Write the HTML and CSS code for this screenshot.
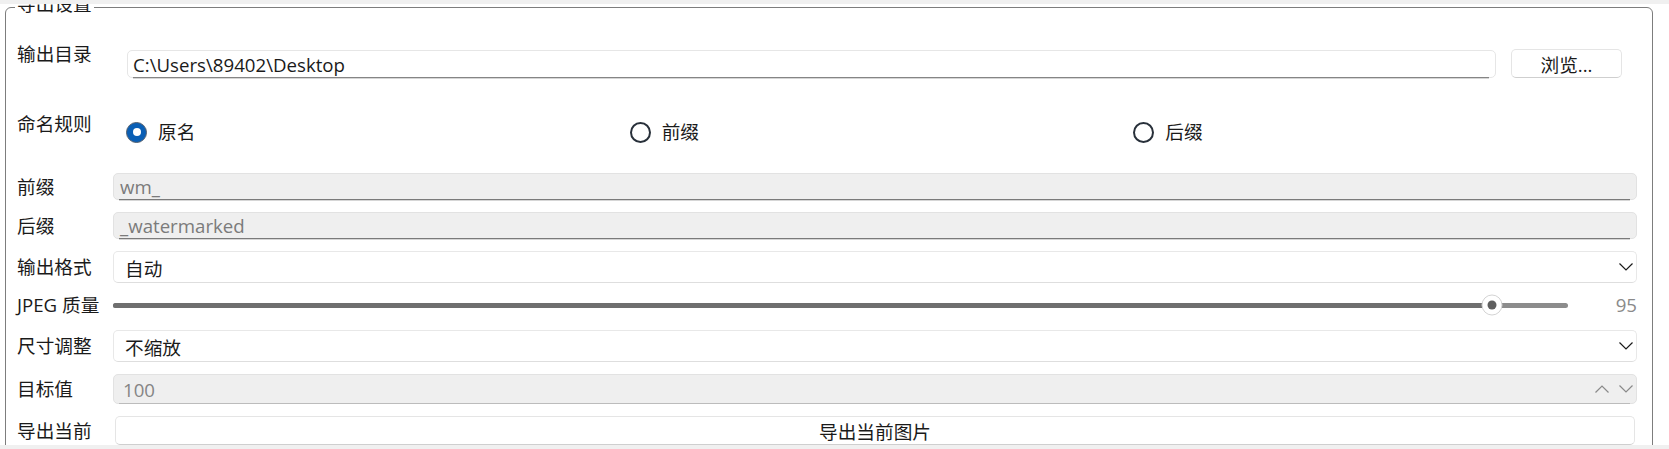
FILE: index.html
```html
<!DOCTYPE html>
<html lang="zh-CN">
<head>
<meta charset="utf-8">
<title>导出设置</title>
<link rel="stylesheet" href="styles.css">
</head>
<body>
<div class="window">
  <div class="viewport">
    <fieldset class="group">
      <legend class="group-title">导出设置</legend>

      <div class="row row-dir">
        <label class="label">输出目录</label>
        <div class="dir-box">
          <div class="lineedit"><span>C:\Users\89402\Desktop</span></div>
          <button class="btn btn-browse">浏览...</button>
        </div>
      </div>

      <div class="row row-naming">
        <label class="label">命名规则</label>
        <div class="radio-group">
          <div class="radio checked"><span class="radio-mark"></span><span>原名</span></div>
          <div class="radio"><span class="radio-mark"></span><span>前缀</span></div>
          <div class="radio"><span class="radio-mark"></span><span>后缀</span></div>
        </div>
      </div>

      <div class="form">
        <div class="row">
          <label class="label">前缀</label>
          <div class="lineedit disabled field"><span>wm_</span></div>
        </div>
        <div class="row">
          <label class="label">后缀</label>
          <div class="lineedit disabled field"><span>_watermarked</span></div>
        </div>
        <div class="row">
          <label class="label">输出格式</label>
          <div class="combo field">
            <span>自动</span>
            <svg class="chev" width="14" height="8" viewBox="0 0 14 8"><polyline points="0.5,0.5 7,7 13.5,0.5" /></svg>
          </div>
        </div>
        <div class="row row-slider">
          <label class="label">JPEG 质量</label>
          <div class="slider">
            <div class="track">
              <div class="track-fill" style="width: 94.8%"></div>
              <div class="handle" style="left: 94.8%"><span class="handle-dot"></span></div>
            </div>
          </div>
          <span class="slider-value">95</span>
        </div>
        <div class="row">
          <label class="label">尺寸调整</label>
          <div class="combo field">
            <span>不缩放</span>
            <svg class="chev" width="14" height="8" viewBox="0 0 14 8"><polyline points="0.5,0.5 7,7 13.5,0.5" /></svg>
          </div>
        </div>
        <div class="row">
          <label class="label">目标值</label>
          <div class="spin disabled field">
            <span>100</span>
            <span class="spin-arrows">
              <svg class="chev chev-dim" width="14" height="8" viewBox="0 0 14 8"><polyline points="0.5,7.5 7,1 13.5,7.5" /></svg>
              <svg class="chev chev-dim" width="14" height="8" viewBox="0 0 14 8"><polyline points="0.5,0.5 7,7 13.5,0.5" /></svg>
            </span>
          </div>
        </div>
        <div class="row row-export">
          <label class="label">导出当前</label>
          <button class="btn btn-export">导出当前图片</button>
        </div>
      </div>
    </fieldset>
  </div>
</div>
</body>
</html>
```

FILE: styles.css
```css
html, body {
  margin: 0;
  padding: 0;
}

body {
  background: #f0f0f0;
  font-family: "Open Sans", "Noto Sans CJK SC", sans-serif;
  font-size: 18.67px;
  color: #1a1a1a;
}

.window {
  width: 1669px;
  height: 449px;
  overflow: hidden;
}

.viewport {
  margin-top: 4px;
  height: 441px;
  background: #ffffff;
  overflow: hidden;
}

.group {
  margin: -9px 0 0 5px;
  width: 1648px;
  box-sizing: border-box;
  border: 1px solid #7d7d7d;
  border-radius: 6px;
  padding: 0 15px 20px 11px;
  min-width: 0;
}

.group-title {
  padding: 0 2px 6px;
  margin-left: -2px;
  line-height: 18px;
}

.row {
  display: flex;
  align-items: flex-start;
}

.label {
  width: 96px;
  flex: none;
  line-height: 24px;
  white-space: nowrap;
}

/* output directory row */
.row-dir {
  margin-top: 23px;
}

.dir-box {
  flex: 1;
  display: flex;
  gap: 15px;
  margin: 8px 15px 0 14px;
}

.lineedit {
  position: relative;
  flex: 1;
  height: 28px;
  box-sizing: border-box;
  border: 1px solid #e6e6e6;
  border-radius: 5px;
  background: #ffffff;
  padding: 0 5px;
  display: flex;
  align-items: center;
  white-space: nowrap;
}

.lineedit::after {
  content: "";
  position: absolute;
  left: 5px;
  right: 6px;
  bottom: -1px;
  height: 1px;
  background: #858585;
  box-shadow: 0 1px 0 #d6d6d6;
}

.lineedit.disabled {
  height: 27px;
  background: #efefef;
  border-color: #e2e2e2;
  color: #7b7b7b;
  padding-left: 6px;
}

.lineedit.disabled::after {
  background: #7a7a7a;
}

.btn {
  font: inherit;
  color: inherit;
  background: #ffffff;
  border: 1px solid #e5e5e5;
  border-bottom-color: #cfcfcf;
  border-radius: 5px;
  padding: 0;
  box-sizing: border-box;
  cursor: default;
}

.btn-browse {
  flex: none;
  width: 111px;
  height: 29px;
  margin-top: -1px;
}

/* naming rule row */
.row-naming {
  margin-top: 34px;
}

.radio-group {
  flex: 1;
  display: grid;
  grid-template-columns: repeat(3, 1fr);
  margin: 8px 0 0 13px;
}

.radio {
  display: flex;
  align-items: center;
  gap: 11px;
  line-height: 24px;
}

.radio-mark {
  flex: none;
  width: 21px;
  height: 21px;
  box-sizing: border-box;
  border-radius: 50%;
  border: 2px solid #28303a;
  background: #ffffff;
}

.radio.checked .radio-mark {
  border: 1.5px solid #55606e;
  background: #0a5fb5;
  display: flex;
  align-items: center;
  justify-content: center;
}

.radio.checked .radio-mark::before {
  content: "";
  width: 8px;
  height: 8px;
  border-radius: 50%;
  background: #ffffff;
}

/* form rows */
.form {
  margin-top: 29px;
  display: flex;
  flex-direction: column;
  gap: 12px;
}

.form .row {
  align-items: center;
}

.field {
  flex: 1;
}

.combo {
  height: 32px;
  box-sizing: border-box;
  border: 1px solid #e8e8e8;
  border-bottom-color: #dedede;
  border-radius: 5px;
  background: #ffffff;
  display: flex;
  align-items: center;
  justify-content: space-between;
  padding: 0 3px 0 11px;
}

.chev {
  display: block;
  fill: none;
  stroke: #1a1a1a;
  stroke-width: 1.2;
}

.chev-dim {
  stroke: #8a8a8a;
}

/* slider */
.row-slider {
  height: 26px;
  margin-top: -3px;
}

.slider {
  flex: 1;
}

.track {
  position: relative;
  height: 5px;
  border-radius: 3px;
  background: #8c8c8c;
}

.track-fill {
  height: 100%;
  border-radius: 3px;
  background: #6f6f6f;
}

.handle {
  position: absolute;
  top: 50%;
  width: 21px;
  height: 21px;
  box-sizing: border-box;
  transform: translate(-50%, -50%);
  border-radius: 50%;
  background: #ffffff;
  border: 1px solid #d4d4d4;
  display: flex;
  align-items: center;
  justify-content: center;
}

.handle-dot {
  width: 9px;
  height: 9px;
  border-radius: 50%;
  background: #5f5f5f;
}

.slider-value {
  width: 69px;
  flex: none;
  text-align: right;
  color: #8a8a8a;
  line-height: 24px;
}

/* spin box */
.spin {
  position: relative;
  height: 30px;
  box-sizing: border-box;
  border: 1px solid #e2e2e2;
  border-radius: 5px;
  background: #efefef;
  color: #858585;
  display: flex;
  align-items: center;
  justify-content: space-between;
  padding: 0 3px 0 9px;
}

.spin::after {
  content: "";
  position: absolute;
  left: 5px;
  right: 6px;
  bottom: -1px;
  height: 1px;
  background: #bcbcbc;
}

.spin-arrows {
  display: flex;
  gap: 10px;
}

/* export */
.btn-export {
  flex: 1;
  height: 29px;
  margin: 0 2px;
  align-self: flex-start;
}
```
